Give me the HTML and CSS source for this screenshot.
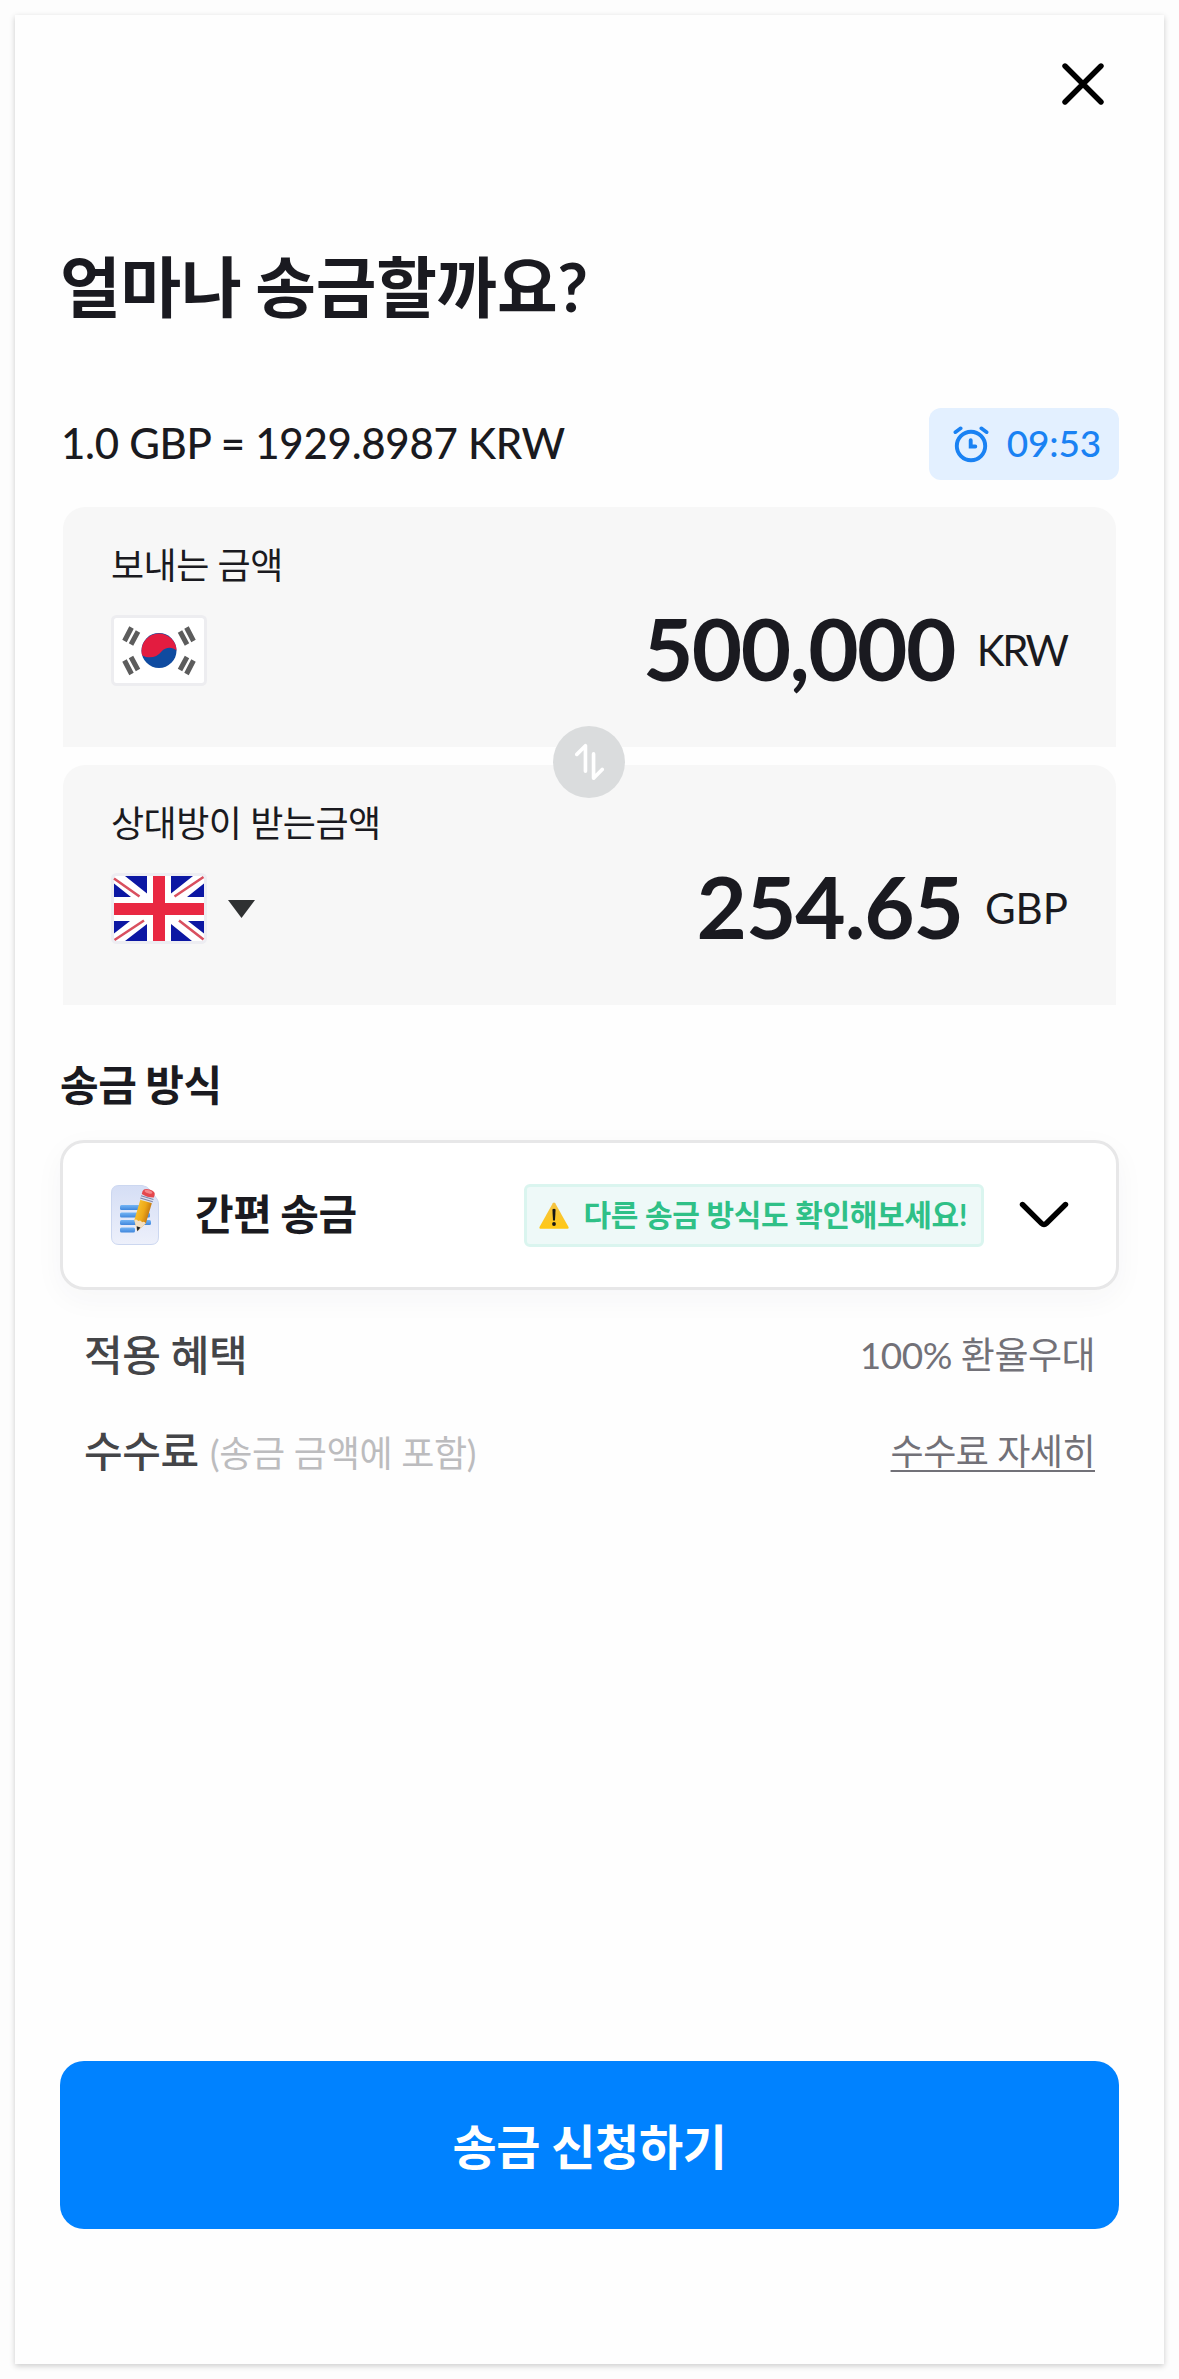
FILE: index.html
```html
<!DOCTYPE html>
<html lang="ko">
<head>
<meta charset="utf-8">
<title>송금</title>
<link rel="stylesheet" href="styles.css">
</head>
<body>
<main class="screen">
  <header class="header">
    <button class="close" aria-label="닫기">
      <svg width="42" height="42" viewBox="0 0 42 42"><path d="M3 3 39 39M39 3 3 39" fill="none" stroke="#000" stroke-width="5.4" stroke-linecap="round"/></svg>
    </button>
  </header>

  <h1 class="title">얼마나 송금할까요?</h1>

  <div class="rate-row">
    <span class="rate">1.0 GBP = 1929.8987 KRW</span>
    <span class="timer">
      <svg width="36" height="38" viewBox="0 0 36 38" fill="none" stroke="#1a82f3" stroke-linecap="round">
        <circle cx="18" cy="21" r="14.2" stroke-width="3.9"/>
        <path d="M17.7 15.200V21.500H22.300" stroke-width="3.9"/>
        <path d="M2.300 7.200 7.700 3.300M28.300 3.300 33.700 7.200" stroke-width="3.6"/>
      </svg>
      <span class="timer-text">09:53</span>
    </span>
  </div>

  <section class="amounts">
    <div class="amount-card">
      <div class="label">보내는 금액</div>
      <div class="amount-row">
        <svg class="flag" width="96" height="71" viewBox="0 0 96 71">
          <rect x="1.500" y="1.500" width="93" height="68" rx="4" fill="#fff" stroke="#ededf0" stroke-width="3"/>
          <circle cx="48" cy="35.500" r="17.500" fill="#0f4ba0"/>
          <path d="M30.500 36.500A17.500 17.500 0 0 1 65.500 35.500C61 31.500 54.500 32 50.500 36.500 46 42.500 38 44 31.300 40.500Q30.600 38.500 30.500 36.500Z" fill="#e31c40"/>
          <g stroke="#5c5c5c" stroke-width="5">
            <path d="M20.500 12.500 13.500 26M27 16.500 20 29.500"/>
            <path d="M75.500 12.500 82.500 26M69 16.500 76 29.500"/>
            <path d="M20.500 59 13.500 45.500M27 55 20 42"/>
            <path d="M75.500 59 82.500 45.500M69 55 76 42"/>
          </g>
        </svg>
        <span class="value value-krw">500,000</span>
        <span class="unit unit-krw">KRW</span>
      </div>
    </div>
    <div class="amount-card">
      <div class="label">상대방이 받는금액</div>
      <div class="amount-row">
        <svg class="flag" width="96" height="71" viewBox="0 0 96 71">
          <rect x="1.500" y="1.500" width="93" height="68" rx="4" fill="#fff" stroke="#ededf2" stroke-width="3"/>
          <g fill="#0c17a3">
            <path d="M14 3H36V20.500ZM3 10.500V24H20Z"/>
            <path d="M82 3H60V20.500ZM93 10.500V24H76Z"/>
            <path d="M14 68H36V51ZM3 60.500V48H19Z"/>
            <path d="M81 68H60V51ZM93 60.500V48H77Z"/>
          </g>
          <path d="M3 5.500 28.500 23.500M92.500 4 63.500 23.500M3.500 67 33 47.500M92.500 66.500 68 47.500" stroke="#d9505f" stroke-width="2.600" fill="none"/>
          <path d="M42 3H54V30H93V42H54V68H42V42H3V30H42Z" fill="#e92842"/>
        </svg>
        <svg class="caret" width="27" height="18" viewBox="0 0 27 18"><path d="M0 0H27L13.500 18Z" fill="#2f3132"/></svg>
        <span class="value value-gbp">254.65</span>
        <span class="unit">GBP</span>
      </div>
    </div>
    <button class="swap" aria-label="통화 바꾸기">
      <svg width="72" height="72" viewBox="0 0 71 71" fill="none" stroke="#fff" stroke-width="3.600" stroke-linecap="round" stroke-linejoin="round"><path d="M23.500 28 32 19.500V44.500M40 27.500V51.500L48.500 42.800"/></svg>
    </button>
  </section>

  <h2 class="section-title">송금 방식</h2>
  <div class="method">
    <svg class="note" width="48" height="60" viewBox="0 0 48 60">
      <defs>
        <linearGradient id="paper" x1="0" y1="0" x2="0" y2="1"><stop offset="0" stop-color="#d5def5"/><stop offset="1" stop-color="#edf0fb"/></linearGradient>
        <linearGradient id="line" x1="0" y1="0" x2="0" y2="1"><stop offset="0" stop-color="#74b5f5"/><stop offset="1" stop-color="#3f86dc"/></linearGradient>
        <linearGradient id="wood" x1="0" y1="0" x2="1" y2="0"><stop offset="0" stop-color="#f6bd2c"/><stop offset=".55" stop-color="#eda817"/><stop offset="1" stop-color="#c87c12"/></linearGradient>
      </defs>
      <path d="M8 .500H31Q36 1 39 5L46 14Q47.500 16 47.500 19V52Q47.500 59.500 40 59.500H8Q.500 59.500 .500 52V8Q.500 .500 8 .500Z" fill="url(#paper)" stroke="#ccd7f0"/>
      <g fill="url(#line)"><rect x="9" y="20" width="25" height="5" rx="1.500"/><rect x="9" y="27.500" width="30" height="5" rx="1.500"/><rect x="9" y="35" width="31" height="5" rx="1.500"/><rect x="9" y="42.500" width="15" height="5" rx="1.500"/></g>
      <g transform="translate(38.500 5) rotate(16.500)">
        <path d="M-6 11H6V33L0 43 -6 33Z" fill="url(#wood)"/>
        <path d="M-6 33Q-4 31-2 33 0 31 2 33 4 31 6 33L1.500 41 0 43-1.500 41Z" fill="#f3dfc0"/>
        <path d="M-2 38.500H2L0 43Z" fill="#222"/>
        <rect x="-6.500" y="5.500" width="13" height="6.500" rx="1" fill="#dfe2ef"/>
        <path d="M-6.500 8H6.500M-6.500 10.300H6.500" stroke="#7d86ad" stroke-width="1"/>
        <path d="M-6.300 6V3Q-6-.500 0-.500T6.300 3V6Q0 8-6.300 6Z" fill="#e4474d"/>
        <ellipse cx="-.5" cy="2" rx="4" ry="1.500" fill="#f4868a"/>
      </g>
    </svg>
    <span class="method-name">간편 송금</span>
    <span class="notice">
      <svg width="30" height="27" viewBox="0 0 30 27"><defs><linearGradient id="warn" x1="0" y1="0" x2="0" y2="1"><stop offset="0" stop-color="#f5c445"/><stop offset="1" stop-color="#ffc814"/></linearGradient></defs><path d="M13.800 1.200Q15-.400 16.200 1.200L29.500 25Q30 26.800 28.500 26.800H1.500Q0 26.800 .500 25Z" fill="url(#warn)"/><path d="M13.400 7.500Q15 6 16.600 7.500L16 18.500H14Z" fill="#161616"/><circle cx="15" cy="22" r="1.900" fill="#161616"/></svg>
      <span class="notice-text">다른 송금 방식도 확인해보세요!</span>
    </span>
    <svg class="chevron" width="50" height="28" viewBox="0 0 50 28"><path d="M3.500 3.500 22.500 22.300Q25 24.700 27.500 22.300L46.500 3.500" fill="none" stroke="#000" stroke-width="5.400" stroke-linecap="round"/></svg>
  </div>

  <dl class="details">
    <div class="detail"><dt>적용 혜택</dt><dd class="benefit">100% 환율우대</dd></div>
    <div class="detail"><dt>수수료 <span class="hint">(송금 금액에 포함)</span></dt><dd class="fee"><a class="link">수수료 자세히</a></dd></div>
  </dl>

  <button class="submit">송금 신청하기</button>
</main>
</body>
</html>
```

FILE: styles.css
```css
* { box-sizing: border-box; }

body {
  margin: 0;
  padding: 15px;
  height: 2379px;
  background: #fdfdfd;
  color: #1a1a20;
  font-family: Lato, "Noto Sans CJK KR", sans-serif;
}

button {
  border: 0;
  padding: 0;
  background: none;
  font-family: inherit;
}

svg { display: block; flex: none; }

.screen {
  display: flex;
  flex-direction: column;
  height: 2349px;
  padding: 0 45px 135px;
  background: #fefefe;
  box-shadow: 0 2px 6px rgba(0, 0, 0, .2);
}

.header {
  display: flex;
  justify-content: flex-end;
  height: 232px;
  padding: 48px 15px 0 0;
}

.close { height: 42px; }

.title {
  margin: 0;
  font-size: 66px;
  line-height: 80px;
  font-weight: 700;
  letter-spacing: -.25px;
  word-spacing: -2px;
  white-space: nowrap;
}

.rate-row {
  display: flex;
  align-items: center;
  justify-content: space-between;
  margin-top: 81px;
  height: 72px;
}

.rate {
  padding: 0 0 2px 1px;
  font-size: 42px;
  line-height: 50px;
  font-weight: 500;
  letter-spacing: -.27px;
}

.timer {
  display: flex;
  align-items: center;
  justify-content: space-between;
  width: 190px;
  height: 72px;
  padding: 0 18px 0 24px;
  border-radius: 12px;
  background: #e3f0ff;
  color: #1a82f3;
}

.timer-text {
  padding-bottom: 3px;
  font-size: 37px;
  line-height: 44px;
  font-weight: 500;
  letter-spacing: -.2px;
}

.amounts {
  position: relative;
  display: flex;
  flex-direction: column;
  gap: 18px;
  margin: 27px 3px 0;
}

.amount-card {
  height: 240px;
  padding: 38px 48px 0;
  border-radius: 22px 22px 0 0;
  background: #f7f7f7;
}

.label {
  font-size: 36px;
  line-height: 40px;
  letter-spacing: -.5px;
}

.amount-row {
  display: flex;
  align-items: center;
  height: 71px;
  margin-top: 30px;
}

.caret { margin-left: 21px; }

.value {
  align-self: flex-start;
  margin-left: auto;
  font-size: 87px;
  line-height: 65px;
  font-weight: 700;
}

.value-krw { letter-spacing: -1.600px; }

.value-gbp { letter-spacing: -1.100px; }

.unit {
  margin: 0 0 1px 22px;
  font-size: 42px;
  line-height: 50px;
}

.unit-krw {
  margin-right: 1.500px;
  letter-spacing: -2.500px;
}

.swap {
  position: absolute;
  left: calc(50% - 36.500px);
  top: 219px;
  width: 72px;
  height: 72px;
  border-radius: 50%;
  background: #dadcdd;
}

.section-title {
  margin: 55px 0 30px;
  font-size: 42px;
  line-height: 50px;
  font-weight: 700;
  letter-spacing: -.4px;
  word-spacing: -1px;
}

.method {
  display: flex;
  align-items: center;
  height: 150px;
  padding: 0 47px 0 48px;
  border: 3px solid #e7e7e8;
  border-radius: 24px;
  background: #fff;
  box-shadow: 0 9px 30px rgba(40, 40, 80, .04);
}

.method-name {
  margin-left: 36px;
  padding-bottom: 2px;
  font-size: 42px;
  line-height: 50px;
  font-weight: 700;
  letter-spacing: -.4px;
  word-spacing: -1px;
}

.notice {
  display: flex;
  align-items: center;
  gap: 15px;
  width: 460px;
  height: 63px;
  margin-left: auto;
  padding-left: 12px;
  border: 3px solid #daf5ef;
  border-radius: 6px;
  background: #eef9f8;
  color: #2fc087;
  white-space: nowrap;
}

.notice-text {
  padding-bottom: 3px;
  font-size: 30px;
  line-height: 36px;
  font-weight: 700;
  letter-spacing: -.33px;
}

.chevron { margin-left: 35.500px; }

.details { margin: 40px 24px 0; }

.detail {
  display: flex;
  justify-content: space-between;
  align-items: center;
  height: 50px;
  line-height: 50px;
}

.detail + .detail { margin-top: 47px; }

dt {
  color: #444548;
  font-size: 42px;
  font-weight: 500;
  letter-spacing: -.4px;
}

.hint {
  margin-left: 1px;
  color: #bcbcbe;
  font-size: 36px;
  font-weight: 400;
  letter-spacing: -.3px;
}

dd {
  margin: 0;
  color: #727178;
  font-size: 36px;
}

.benefit {
  font-size: 37px;
  letter-spacing: -.5px;
}

.fee {
  padding-bottom: 3px;
  letter-spacing: -.5px;
}

.link {
  text-decoration: underline;
  text-decoration-thickness: 2px;
  text-underline-offset: 5px;
}

.submit {
  height: 168px;
  margin-top: auto;
  padding-top: 4px;
  border-radius: 24px;
  background: #0082ff;
  color: #fff;
  font-size: 48px;
  line-height: 58px;
  font-weight: 700;
  letter-spacing: -.4px;
}
```
